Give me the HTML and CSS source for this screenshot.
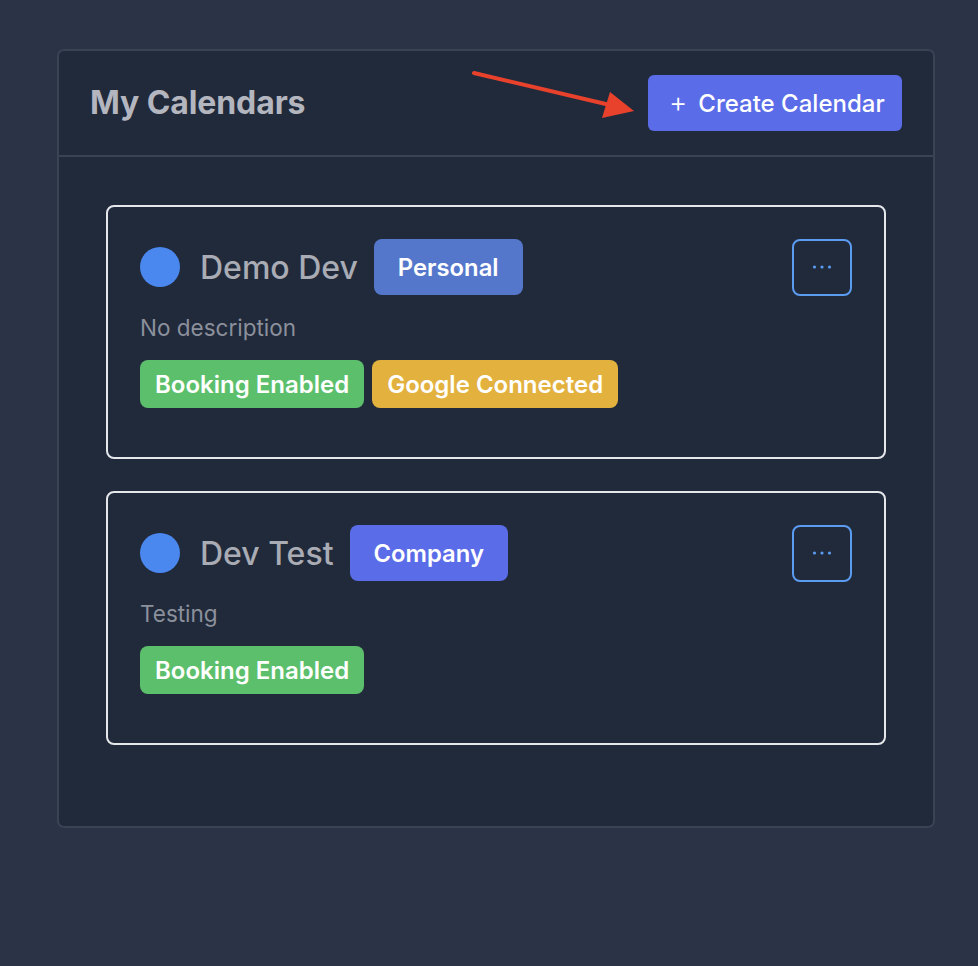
FILE: index.html
```html
<!DOCTYPE html>
<html>
<head>
<meta charset="utf-8">
<link rel="stylesheet" href="styles.css">
</head>
<body>
<div class="page">
  <section class="panel">
    <header class="panel-head">
      <h1 class="panel-title">My Calendars</h1>
      <button class="create-btn"><span class="plus">+</span>Create Calendar</button>
      <svg class="arrow" width="180" height="60" viewBox="0 0 180 60">
        <line x1="4" y1="8" x2="140" y2="40" stroke="#e8412c" stroke-width="4" stroke-linecap="round"/>
        <polygon points="164,46 132,53 140,27" fill="#e8412c"/>
      </svg>
    </header>
    <div class="panel-body">
      <article class="cal-card">
        <div class="cal-top">
          <span class="dot"></span>
          <span class="cal-name">Demo Dev</span>
          <span class="type-badge personal">Personal</span>
          <button class="more-btn"><svg width="22" height="6" viewBox="0 0 22 6"><circle cx="3.5" cy="3" r="1.6" fill="#5b9bf0"/><circle cx="11" cy="3" r="1.6" fill="#5b9bf0"/><circle cx="18.5" cy="3" r="1.6" fill="#5b9bf0"/></svg></button>
        </div>
        <p class="cal-desc">No description</p>
        <div class="tags">
          <span class="tag green">Booking Enabled</span>
          <span class="tag yellow">Google Connected</span>
        </div>
      </article>
      <article class="cal-card">
        <div class="cal-top">
          <span class="dot"></span>
          <span class="cal-name">Dev Test</span>
          <span class="type-badge company">Company</span>
          <button class="more-btn"><svg width="22" height="6" viewBox="0 0 22 6"><circle cx="3.5" cy="3" r="1.6" fill="#5b9bf0"/><circle cx="11" cy="3" r="1.6" fill="#5b9bf0"/><circle cx="18.5" cy="3" r="1.6" fill="#5b9bf0"/></svg></button>
        </div>
        <p class="cal-desc">Testing</p>
        <div class="tags">
          <span class="tag green">Booking Enabled</span>
        </div>
      </article>
    </div>
  </section>
</div>
</body>
</html>
```

FILE: styles.css
```css
* { box-sizing: border-box; }
html, body { margin: 0; padding: 0; }
body {
  background: #2b3446;
  font-family: Inter, "Noto Sans", sans-serif;
  width: 978px;
  height: 966px;
  overflow: hidden;
}
.page {
  padding: 49px 43px 0 57px;
}
.panel {
  width: 878px;
  background: #212a3b;
  border: 2px solid #3a4354;
  border-radius: 7px;
}
.panel-head {
  position: relative;
  display: flex;
  align-items: center;
  justify-content: space-between;
  padding: 24px 31px 24px 31px;
  border-bottom: 2px solid #3a4354;
}
.panel-title {
  margin: 0;
  font-size: 32px;
  font-weight: 700;
  line-height: 40px;
  color: #b4b6bf;
  letter-spacing: -0.1px;
}
.create-btn {
  height: 56px;
  width: 254px;
  border: none;
  border-radius: 6px;
  background: #5b6ce8;
  color: #fff;
  font-family: inherit;
  font-size: 24px;
  font-weight: 500;
  display: flex;
  align-items: center;
  justify-content: flex-start;
  gap: 11px;
  padding: 0 0 0 21px;
}
.plus {
  font-size: 28px;
  font-weight: 300;
  line-height: 1;
  margin-top: -3px;
}
.arrow {
  position: absolute;
  left: 411px;
  top: 14px;
}
.panel-body {
  padding: 48px 47px 81px 47px;
  display: flex;
  flex-direction: column;
  gap: 32px;
}
.cal-card {
  border: 2px solid #e5e7eb;
  border-radius: 8px;
  padding: 32px 32px 48px 32px;
  height: 254px;
}
.cal-top {
  display: flex;
  align-items: center;
  height: 56px;
}
.dot {
  width: 40px;
  height: 40px;
  border-radius: 50%;
  background: #4a87ef;
  flex: none;
}
.cal-name {
  margin-left: 20px;
  font-size: 32px;
  font-weight: 500;
  color: #a9acb4;
}
.type-badge {
  margin-left: 16px;
  height: 56px;
  padding: 0 24px;
  border-radius: 8px;
  display: flex;
  align-items: center;
  color: #fff;
  font-size: 23.8px;
  font-weight: 600;
}
.personal { background: #5577cb; }
.company { background: #5b6ce8; }
.more-btn {
  margin-left: auto;
  width: 60px;
  height: 57px;
  border: 2px solid #5b9bf0;
  border-radius: 8px;
  background: transparent;
  display: flex;
  align-items: center;
  justify-content: center;
  padding: 0;
}
.cal-desc {
  margin: 19px 0 0 0;
  font-size: 22.5px;
  line-height: 28px;
  color: #8b909b;
}
.tags {
  display: flex;
  gap: 8px;
  margin-top: 18px;
}
.tag {
  height: 48px;
  padding: 0 15px;
  border-radius: 8px;
  display: flex;
  align-items: center;
  color: #fff;
  font-size: 24px;
  font-weight: 600;
}
.green { background: #5cbf6b; }
.yellow { background: #e2b13e; }
```
